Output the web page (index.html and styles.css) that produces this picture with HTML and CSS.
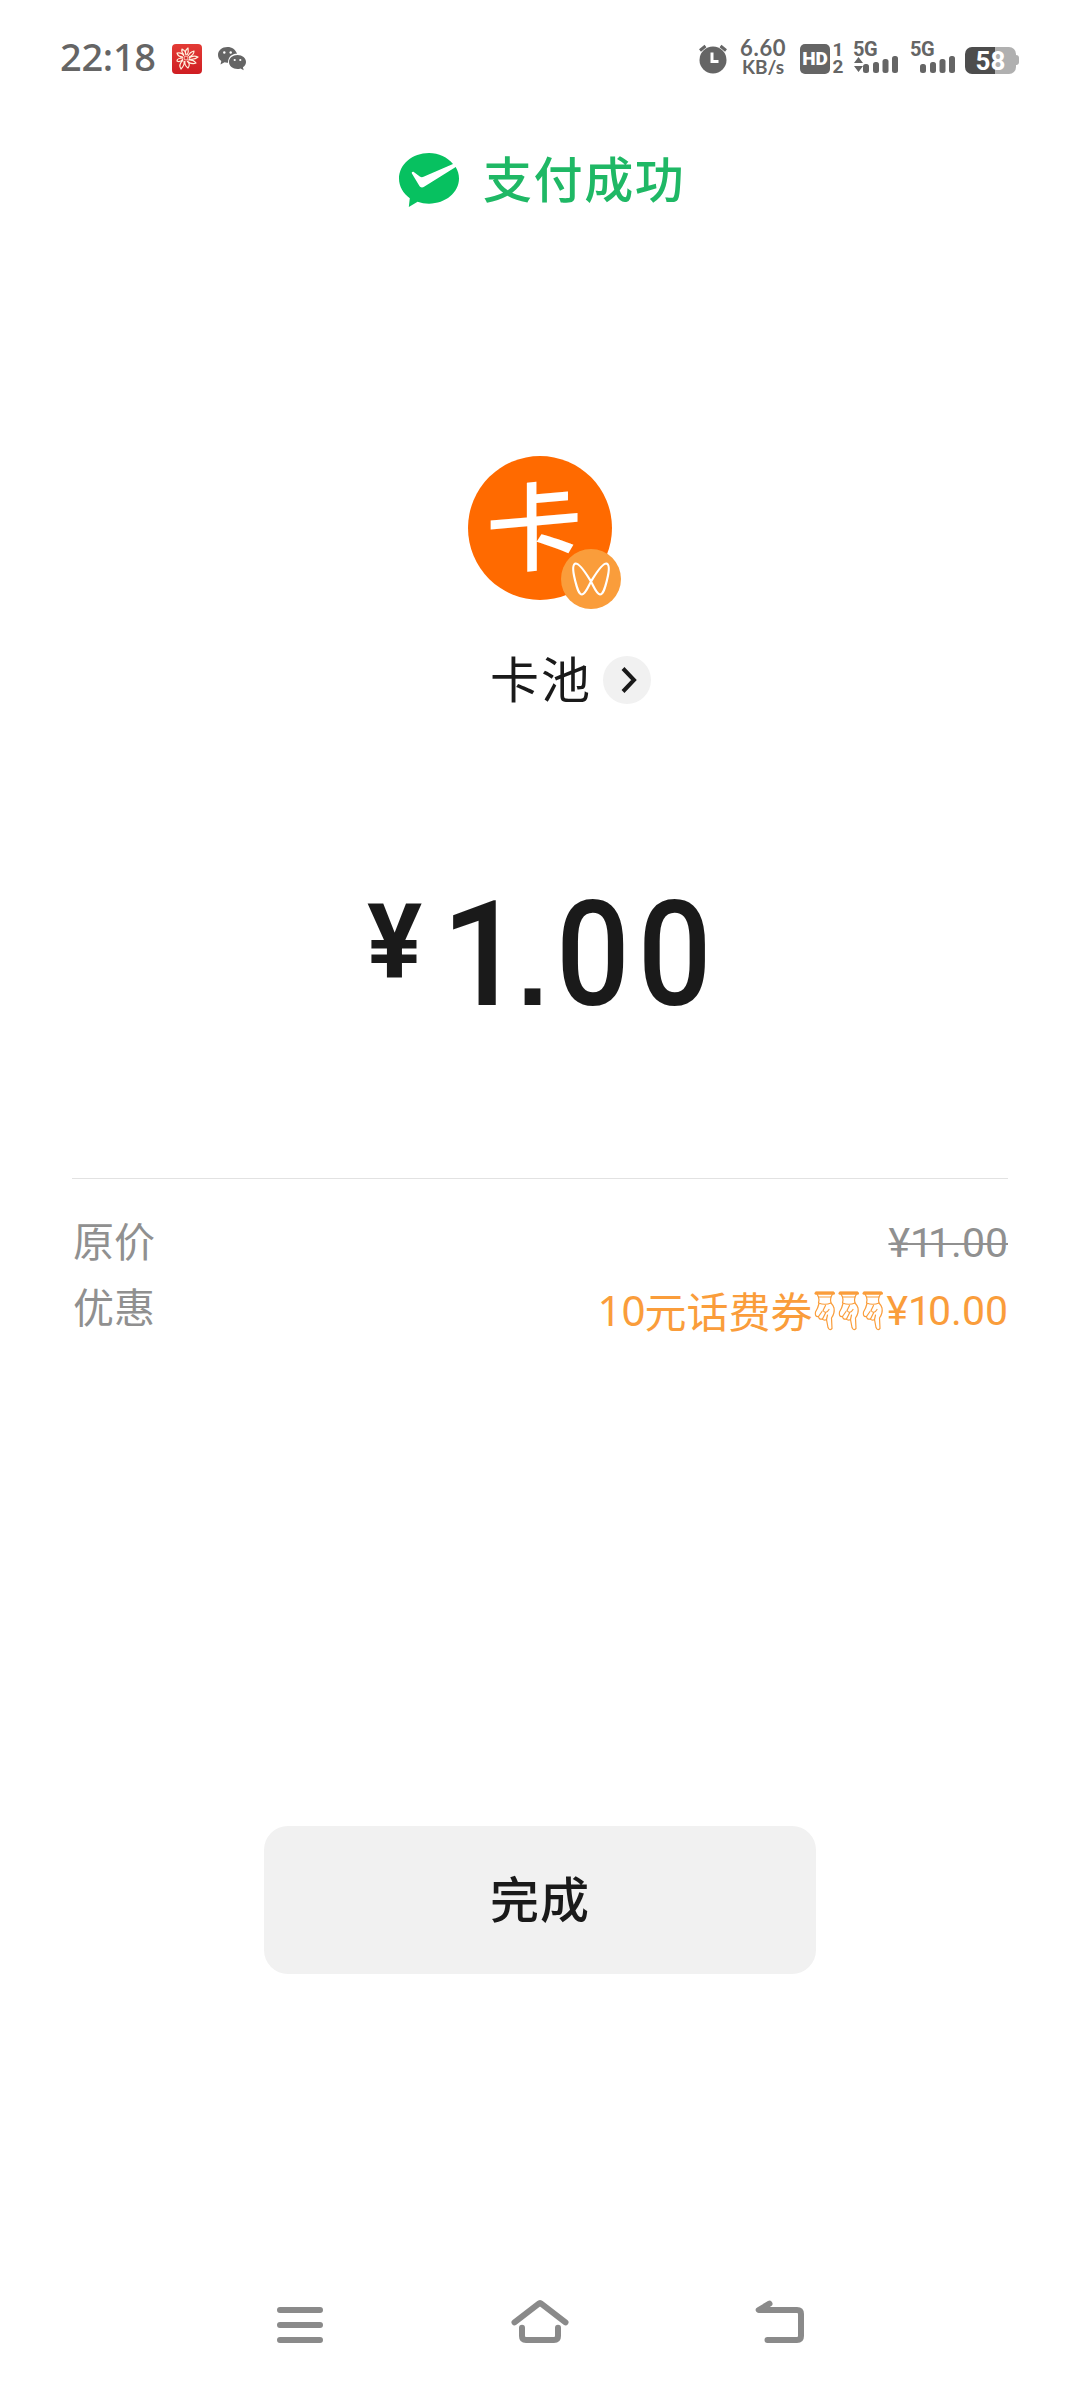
FILE: index.html
```html
<!DOCTYPE html>
<html lang="zh-CN">
<head>
<meta charset="utf-8">
<title>支付成功</title>
<link rel="stylesheet" href="styles.css">
</head>
<body>
<div class="screen">
  <header class="status">
    <span class="clock">22:18</span>
    <svg class="app-icon" width="30" height="30" viewBox="0 0 30 30">
      <defs><linearGradient id="red" x1="0" y1="0" x2="0" y2="1"><stop offset="0" stop-color="#e33b35"/><stop offset="1" stop-color="#cf1d22"/></linearGradient></defs>
      <rect width="30" height="30" rx="4" fill="url(#red)"/>
      <g fill="none" stroke="#fff0dc" stroke-width="1.2" stroke-linejoin="round">
        <circle cx="14" cy="14" r="2" stroke-width=".8"/>
        <path d="M14 11Q12 7 16 4Q17 8 15 11M16 12Q18 8 22 7Q22 11 17 13M17 14Q21 11 26 13Q23 16 17 15M16 16Q21 15 24 19Q20 21 15 17M15 17Q19 20 16 24Q12 21 13 17M12 17Q13 21 9 25Q6 21 11 16M11 15Q8 19 5 17Q5 14 11 14M11 13Q6 13 5 9Q10 8 12 12M12 11Q9 8 10 5Q14 7 14 11"/>
      </g>
    </svg>
    <svg class="chat-icon" width="30" height="26" viewBox="0 0 30 26" fill="#656565">
      <path d="M10.500 1C5 1 1 4.500 1 9c0 2.600 1.300 4.600 3.300 6L3.500 18.500l4-2.200q1.500.5 3.500.4C11 10 16 7.500 20 7.700C18.600 3.700 15 1 10.500 1z"/>
      <path d="M20.500 9C15.700 9 12 12.200 12 16s3.700 7 8.500 7q1.500 0 3-.5l3.200 1.700-.8-2.900C27.800 20 29 18.200 29 16c0-3.800-3.700-7-8.500-7z"/>
      <g fill="#fff"><circle cx="7.300" cy="6.500" r="1.200"/><circle cx="13.700" cy="6.500" r="1.200"/><circle cx="17.700" cy="14" r="1.100"/><circle cx="23.300" cy="14" r="1.100"/></g>
    </svg>
    <div class="indicators">
      <svg class="alarm" width="30" height="30" viewBox="0 0 30 30">
        <circle cx="15" cy="16" r="13.500" fill="#656565"/>
        <path d="M2 6.500L7.500 2M28 6.500L22.500 2" stroke="#656565" stroke-width="3"/>
        <path d="M14 8.500V17.500H20.500" fill="none" stroke="#fff" stroke-width="3"/>
      </svg>
      <div class="speed"><span class="rate">6.60</span><span class="unit">KB/s</span></div>
      <span class="hd">HD</span>
      <div class="sims"><span>1</span><span>2</span></div>
      <div class="signal first"><span>5G</span>
        <svg width="46" height="20" viewBox="0 0 46 20" fill="#656565"><path d="M0 9L4.500 3L9 9zM0 12H9L4.500 18z"/><rect x="9" y="10" width="6" height="9" rx="2.500"/><rect x="19" y="8" width="6" height="11" rx="2.500"/><rect x="28.500" y="5" width="6" height="14" rx="2.500"/><rect x="38" y="2" width="6" height="17" rx="2.500"/></svg>
      </div>
      <div class="signal"><span>5G</span>
        <svg width="46" height="20" viewBox="0 0 46 20" fill="#656565"><rect x="9" y="10" width="6" height="9" rx="2.500"/><rect x="19" y="8" width="6" height="11" rx="2.500"/><rect x="28.500" y="5" width="6" height="14" rx="2.500"/><rect x="38" y="2" width="6" height="17" rx="2.500"/></svg>
      </div>
      <div class="battery"><span class="level">58</span><i class="tip"></i></div>
    </div>
  </header>

  <div class="result">
    <svg width="60" height="54" viewBox="0 0 60 54">
      <path fill="#07c160" d="M30 0C13.400 0 0 11.400 0 25.600c0 8 4.200 15 10.800 19.600L9.800 54l8.800-5.200c3.500 1.200 7.300 1.900 11.400 1.900c16.600 0 30-11.200 30-25.100c0-4.200-1.200-8.100-3.300-11.600L25.500 33.500c-2 1.200-4 1.400-5.200-.8L12.900 20.500c-.6-1.300.8-2.300 2.200-1.300l5.700 4.300c1.200.8 2.600.8 3.700.3L54 11C48.500 4.300 39.800 0 30 0z"/>
    </svg>
    <h1>支付成功</h1>
  </div>

  <div class="avatar"><span class="mark">卡</span>
    <svg class="badge" width="60" height="60" viewBox="0 0 60 60">
      <circle cx="30" cy="30" r="30" fill="#fa9d3b"/>
      <path d="M30 32.500C26 26 19 14 14.500 14.500C11 15.500 12.500 25 14 31C15.800 38 17.500 45.500 21 45.500C24.500 45 27.500 37 30 32.500C34 26 41 14 45.500 14.500C49 15.500 47.500 25 46 31C44.200 38 42.500 45.500 39 45.500C35.500 45 32.500 37 30 32.500z" fill="none" stroke="#fff" stroke-width="2.200"/>
    </svg>
  </div>

  <div class="payee"><span>卡池</span>
    <svg width="48" height="48" viewBox="0 0 48 48"><circle cx="24" cy="24" r="24" fill="#f1f1f1"/><path d="M20 12.500L31 24L20 35.500" fill="none" stroke="#1a1a1a" stroke-width="4"/></svg>
  </div>

  <div class="amount"><span class="yen">¥</span><span class="one">1</span><span class="dot">.</span><span class="zeros">00</span></div>

  <section class="details">
    <div class="row"><span class="label">原价</span><del>¥<span class="tight">1</span>1.00</del></div>
    <div class="row"><span class="label">优惠</span>
      <div class="coupon"><span class="ten">10</span><span class="kind">元话费券</span>
        <svg class="hands" width="72" height="44" viewBox="0 0 72 44" role="img" aria-label="☟☟☟">
          <defs><g id="hand" fill="none" stroke="#fa9d3b" stroke-width="1.200" stroke-linejoin="round" stroke-linecap="round">
            <path d="M2 3H19.500L17 8H4.500z"/><path d="M2 4.200H19.500" stroke-width="3"/>
            <path d="M4.500 8Q5.500 11 4.500 14Q11 16.500 17 14Q16 11 17 8"/>
            <path d="M5 14.500Q4 19 1.500 23Q.5 28 4.500 27.500Q5 31 8.500 30Q10 32 12.500 30.500L14 38.500Q15.500 42 18 39.500L17.500 29Q21 24 20 19Q19 16 17 14"/>
            <path d="M4.500 27.500L8 22.500M8.500 30L11.500 24M12.500 30.500L13.500 26M11.500 16.500L9 21.500Q12 25.500 15 20.500"/>
          </g></defs>
          <use href="#hand"/><use href="#hand" x="24"/><use href="#hand" x="48"/>
        </svg><span class="off">¥<span class="ten-one">1</span>0.00</span></div>
    </div>
  </section>

  <button class="done"><span>完成</span></button>

  <nav class="nav">
    <svg width="60" height="60" viewBox="0 0 60 60"><path d="M10 15H50M10 30H50M10 45H50"/></svg>
    <svg width="60" height="60" viewBox="0 0 60 60"><path d="M4.500 27.300L28.500 8.800Q30 7.500 31.500 8.800L55.500 27.300M12 32.700V41Q12 45 16 45H44Q48 45 48 41V32.700"/></svg>
    <svg width="60" height="60" viewBox="0 0 60 60"><path d="M19.500 8.700L8.700 15H47Q51 15 51 19V41Q51 45 47 45H17.500"/></svg>
  </nav>
</div>
</body>
</html>
```
FILE: styles.css
```css
* { box-sizing: border-box; }
body { margin: 0; background: #fff; color: #1a1a1a; font-family: "Noto Sans", "Noto Sans CJK SC", sans-serif; }
.screen { width: 1080px; height: 2388px; display: flex; flex-direction: column; background: #fff; }
.screen svg { display: block; flex: none; }

.status { height: 116px; padding: 0 61px 0 60px; display: flex; align-items: center; color: #656565; }
.clock { width: 112px; margin-top: -4px; font: 500 38px/40px "Noto Sans", sans-serif; letter-spacing: -0.3px; }
.app-icon { margin-top: 2px; }
.chat-icon { margin-left: 15px; margin-top: 2px; }
.indicators { margin-left: auto; display: flex; align-items: center; height: 40px; }
.alarm { margin-top: 1px; }
.speed { width: 50px; margin: -2px 0 0 12px; display: flex; flex-direction: column; font-family: Lato, sans-serif; font-weight: 700; line-height: 19px; white-space: nowrap; }
.rate { font-size: 22px; letter-spacing: .7px; }
.unit { font-size: 19px; padding-left: 2px; }
.hd { width: 30px; height: 30px; margin: 1px 0 0 10px; border-radius: 5px; background: #656565; color: #fff; font: 900 19px/30px Roboto, sans-serif; text-align: center; }
.sims { width: 12px; margin: 0 10px 0 2px; display: flex; flex-direction: column; font: 700 19px/17px Roboto, sans-serif; text-align: center; }
.signal { width: 46px; height: 32px; margin-right: 11px; display: flex; flex-direction: column; font: 700 20px/14px Roboto, sans-serif; }
.signal span { margin-left: -1px; letter-spacing: -.5px; }
.signal svg { margin-top: -2px; }
.signal:not(.first) { margin-right: 8px; }
.battery { display: flex; align-items: center; margin-top: 4px; }
.level { width: 51px; height: 27px; border-radius: 7px; background: linear-gradient(90deg, #4d4d4d 59%, #b0b0b0 59%); color: #fff; text-align: center; font: 700 26px/28px Roboto, sans-serif; }
.tip { width: 3px; height: 10px; border-radius: 0 3px 3px 0; background: #b0b0b0; }

.result { height: 60px; margin-top: 34px; padding: 0 0 0 399px; display: flex; align-items: center; gap: 24px; }
h1 { margin: -6px 0 0; color: #1fb865; font: 500 49px/60px "Noto Sans CJK SC", sans-serif; letter-spacing: 1.6px; }

.avatar { position: relative; width: 144px; height: 144px; margin: 246px 0 0 468px; border-radius: 50%; background: #ff6a00; color: #fff; text-align: center; }
.mark { display: block; font: 500 96px/132px "Noto Sans CJK SC", sans-serif; transform: translateX(-6px) skewY(-5deg); }
.badge { position: absolute; left: 93px; top: 93px; }

.payee { height: 60px; margin: 50px 0 0 490px; display: flex; align-items: center; gap: 13px; font: 400 49px/60px "Noto Sans CJK SC", sans-serif; }
.payee span { width: 100px; margin-top: -6px; letter-spacing: 2px; white-space: nowrap; }

.amount { height: 144px; margin-top: 174px; padding-left: 367px; display: flex; font: 500 146px/144px Roboto, sans-serif; }
.yen { width: 74px; font-size: 103px; line-height: 116px; font-weight: 700; }
.one { width: 76px; }
.dot { width: 39px; font: 700 112px/166px "Liberation Sans", sans-serif; }
.zeros { letter-spacing: 9px; transform: scaleX(.89); transform-origin: left; }

.details { margin: 150px 72px 0; padding-top: 30px; border-top: 1px solid #e2e2e2; }
.row { height: 66px; display: flex; justify-content: space-between; color: #909090; font: 400 41px/60px "Noto Sans CJK SC", sans-serif; }
.label { margin-left: 1px; }
del { font: 400 41px/68px Roboto, sans-serif; text-decoration-thickness: 2px; }
.tight { letter-spacing: -5px; }
.coupon { display: flex; align-items: center; color: #fa9d3b; height: 72px; font-size: 42px; }
.kind { margin: -3px 1px 0 -1px; }
.ten { margin-top: -3px; font-family: "Noto Sans", sans-serif; }
.ten-one { letter-spacing: -3px; }
.hands { margin-left: 1px; }
.off { font: 400 41px/72px Roboto, sans-serif; }

.done { width: 552px; height: 148px; margin: 485px 0 0 264px; padding: 0 0 6px; border: 0; border-radius: 24px; background: #f1f1f1; color: #1a1a1a; font: 500 49px/142px "Noto Sans CJK SC", sans-serif; }
.done span { letter-spacing: 1px; }
.nav { display: flex; justify-content: space-between; margin: 321px 250px 0 270px; padding-right: 20px; }
.nav svg { fill: none; stroke: #8a8a8a; stroke-width: 6; stroke-linecap: round; stroke-linejoin: round; }
```
